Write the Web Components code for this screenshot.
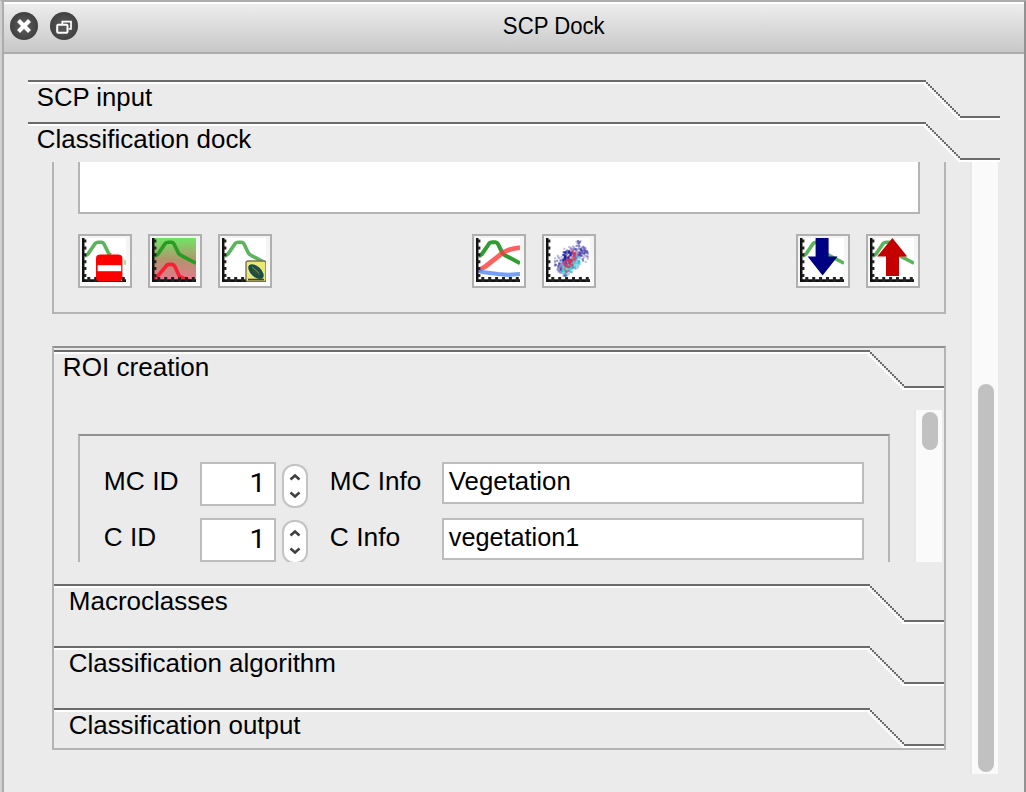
<!DOCTYPE html>
<html lang="en">
<head>
<meta charset="utf-8">
<title>SCP Dock</title>
<style>
html,body{margin:0;height:100%;overflow:hidden;background:#ebebeb}
body{font-family:"Liberation Sans",Arial,sans-serif;color:#000}
</style>
</head>
<body>
<scp-window></scp-window>
<script>
const define=(name,html,ready)=>customElements.define(name,class extends HTMLElement{
  connectedCallback(){
    if(this.shadowRoot)return;
    const root=this.attachShadow({mode:'open'});
    root.innerHTML=typeof html==='function'?html(this):html;
    if(ready)ready(this,root);
  }
});

/* One line of text, condensed or stretched so that its ink fills the given width. */
const pen=document.createElement('canvas').getContext('2d');
define('ui-label',el=>{
  const size=el.getAttribute('size')||26,w=+el.getAttribute('w'),text=el.getAttribute('text');
  const font=el.getAttribute('font')||'Liberation Sans';
  pen.font=size+'px "'+font+'"';
  const m=pen.measureText(text);
  const s=w/(m.actualBoundingBoxRight+m.actualBoundingBoxLeft);
  const x=m.actualBoundingBoxLeft*s+.8;
  return `<style>:host{display:block;flex:none;width:${w}px;height:30px;white-space:nowrap}
  span{display:inline-block;font-family:"${font}",sans-serif;font-size:${size}px;line-height:30px;transform-origin:0 0;transform:translateX(${x.toFixed(2)}px) scaleX(${s.toFixed(4)})}</style><span>${text}</span>`;
});

/* Toolbox tab header: a line that drops down at 45 degrees near its right end. */
define('tab-header',el=>{
  const w=+el.getAttribute('width'),k=w-74;
  let d='',hi='',soft='';
  for(let i=0;i<17;i++){
    d+=`M${k+i*2} ${2+i*2}h2v2h-2z`;
    hi+=`M${k-2+i*2} ${4+i*2}h2v2h-2z`;
    soft+=`M${k+i*2} ${4+i*2}h2v2h-2z`;
  }
  return `<style>:host{display:grid;flex:none;width:${w}px;height:${el.getAttribute('height')}px}
  svg,div{grid-area:1/1}svg{display:block}div{padding:2px 0 0 ${el.getAttribute('indent')}px}</style>
  <svg width="${w}" height="40" shape-rendering="crispEdges"><path fill="#fff" d="M0 2h${k}v2H0zM${w-42} 38H${w}v2H${w-42}z"/>
  <path fill="#f0f0f0" d="${soft}"/><path fill="#fff" d="${hi}"/>
  <path fill="#6b6b6b" d="M0 0h${k}v2H0zM${w-40} 36H${w}v2H${w-40}z${d}"/></svg><div><slot></slot></div>`;
});

define('scroll-bar',el=>`<style>:host{display:block;flex:none;box-sizing:border-box;width:28px;background:#fafafa;border-left:2px solid #e8e8e8;padding-top:${el.getAttribute('start')}px}
i{display:block;width:16px;height:${el.getAttribute('length')}px;margin-left:6px;border-radius:8px;background:#c1c1c1}</style><i></i>`);

const line='M1.3 9.2L3 8 6.7 2.6Q7.2 2.1 8 2.1H9.8Q10.6 2.2 11 3L13.4 7.9Q14 8.5 15 8.9L22 12.6';
const curve=`<path d="${line}" fill="none" stroke="#43ab43" stroke-width="1.8" opacity=".88"/>`;
let axes='<path d="M.6 0V21.3H22" fill="none" stroke="#111" stroke-width="1.3"/><path d="';
for(let i=0;i<6;i++)axes+=`M1 ${1.5+i*3.45}h1.2`;
for(let i=0;i<6;i++)axes+=`M${3.4+i*3.45} 22v-2.5`;
axes+='" stroke="#222" stroke-width="1.5"/>';
const cloud=()=>{
  let seed=17,s='';
  const rnd=()=>(seed=(seed*16807)%2147483647)/2147483647;
  const dot=(x,y,c,o)=>s+=`<rect x="${x.toFixed(1)}" y="${y.toFixed(1)}" width="1" height="1" fill="${c}" opacity="${o}"/>`;
  for(let i=0;i<290;i++){const t=rnd(),n=(rnd()+rnd()-1)*5.5;dot(Math.min(20.5,Math.max(4,5.5+t*13.5+n*.6)),Math.min(18.4,Math.max(1,16-t*12+n)),'#3434a4',.34)}
  for(let i=0;i<90;i++){const t=rnd();dot(8+t*8+(rnd()-.5)*3,16-t*7+(rnd()-.3)*4,'#20dfe8',.45)}
  for(let i=0;i<35;i++)dot(7.5+rnd()*4.5,6+rnd()*5,'#080894',.5);
  for(let i=0;i<60;i++){const t=rnd();dot(9+t*5+(rnd()-.5)*4,15-t*8+(rnd()-.5)*4,'#e02c48',.55)}
  return s;
};
const art={
  remove:()=>curve+axes+'<path d="M14.5 8H22v3.3h-1v8.2h-1v2h-6z" fill="#fff"/><rect x="7" y="8.2" width="13.2" height="13.6" rx="2" fill="#f00"/><rect x="7.8" y="13.6" width="11.8" height="3" fill="#fff"/><path d="M20.9 10.6l1.1.7v2.2l-1.1-.7z" fill="#a8dca8"/>',
  range:()=>`<defs><linearGradient id="g" x2="0" y2="1"><stop stop-color="#70e565"/><stop offset=".5" stop-color="#b3936d"/><stop offset="1" stop-color="#eb7791"/></linearGradient></defs><rect width="22" height="22" fill="url(#g)"/><path d="${line}" fill="none" stroke="#259c22" stroke-width="1.8"/><path d="M1 19.8l2-1 3.7-4.3Q7.5 13.2 8.6 13.2H10q1 .1 1.5 1.2L13.6 19l2.4 1.2 4 1.8" fill="none" stroke="#fa1f32" stroke-width="1.8"/>`+axes,
  calc:()=>curve+axes+'<rect x="12" y="11.5" width="10" height="10.3" rx="1" fill="#ebe775" stroke="#77745b" stroke-width=".7"/><g transform="rotate(43 17 16.8)"><ellipse cx="17" cy="16.8" rx="4.7" ry="2.6" fill="#174f4f"/><ellipse cx="17" cy="16.8" rx="2.5" ry="1.1" fill="#31502e"/><path d="M14 16.4h5" stroke="#a5a66a" stroke-width=".35"/></g><path d="M13 20.8h8" stroke="#45452c" stroke-width=".9"/>',
  plot:()=>`<path d="${line}" fill="none" stroke="#309d30" stroke-width="2"/><path d="M1 16.5L5 14 12 8.5Q15 5.5 22 4.8" fill="none" stroke="#ff3838" stroke-width="2.4" opacity=".8"/><path d="M0 15.5L3 17l8 1 5 .4L22 18" fill="none" stroke="#5c90f5" stroke-width="2.1" opacity=".85"/>`+axes,
  scatter:()=>cloud()+axes,
  import:()=>curve+axes+'<path d="M7.8 0h6.5v9.2h4.5L11.3 18.8 3.8 9.2h4z" fill="#000082"/>',
  export:()=>curve+axes+'<path d="M11.2 0L18.6 9.2h-4.1V19H8V9.2H3.6z" fill="#c50000"/>'
};
define('tool-button',el=>`<style>:host{display:block;box-sizing:border-box;width:54px;height:54px;padding:2px;border:2px solid #b0b0b0;background:linear-gradient(#f3f3f3,#fafafa)}svg{display:block;background:#fff}</style>
<svg width="44" height="44" viewBox="0 0 22 22">${art[el.getAttribute('icon')]()}</svg>`);

define('title-button',el=>`<style>:host,svg{display:block}</style><svg width="28" height="28" viewBox="0 0 28 28"><defs><radialGradient id="b"><stop stop-color="#606060"/><stop offset="1" stop-color="#404040"/></radialGradient></defs><circle cx="14" cy="14" r="14" fill="url(#b)"/>${
 el.getAttribute('icon')==='close'?'<path d="M8.5 8.5l11 11m0-11l-11 11" stroke="#fff" stroke-width="4.2"/>':
 '<path d="M12.3 12V9.6H21V16.8H18.7" fill="none" stroke="#fff" stroke-width="1.7"/><rect x="7.2" y="12.8" width="10.3" height="8" rx="1" fill="#555" stroke="#fff" stroke-width="2"/>'}</svg>`);

define('title-bar',`<style>:host{display:grid;grid-template-columns:498.5px 1fr;box-sizing:border-box;height:52px;border-top:2px solid #fff;border-bottom:2px solid #acacac;background:linear-gradient(#ededed,#c8c8c8)}
div{display:flex;gap:12px;padding:8px 0 0 6px}ui-label{margin-top:7px}</style>
<div><title-button icon="close"></title-button><title-button icon="float"></title-button></div><ui-label text="SCP Dock" size="23.5" w="101.5"></ui-label>`);

define('line-edit',`<style>:host{display:block;box-sizing:border-box;width:422px;height:42px;border:2px solid #bcbcbc;background:#fff;padding:2px 0 0 3.5px}</style><slot></slot>`);

define('spin-box',`<style>:host{display:flex;width:108px;height:46px;gap:6px}
div{box-sizing:border-box;width:76px;height:44px;border:2px solid #bcbcbc;background:#fff;padding:4px 0 0 49px}svg{display:block;margin-top:2px}</style>
<div><ui-label text="1" w="9" size="25.5" font="Roboto"></ui-label></div>
<svg width="26" height="44"><rect x="1" y="1" width="24" height="42" rx="11" fill="#fff" stroke="#c3c3c3" stroke-width="2"/><path d="M8.5 15.5l4.5-4 4.5 4M8.5 28.5l4.5 4 4.5-4" fill="none" stroke="#404040" stroke-width="2.5"/></svg>`);

define('roi-form',`<style>:host{display:flex;height:152px;overflow:hidden;justify-content:space-between;padding-left:24px;padding-right:2px}
section{box-sizing:border-box;width:812px;height:160px;margin-top:24px;border:2px solid #b4b4b4;border-top-color:#909090;padding:26px 0 0 24px}
.r{display:grid;grid-template-columns:96px 130px 112px 422px;height:56px}
.r>ui-label{margin-top:4px}.o{margin-left:1px}</style>
<section><div class="r"><ui-label class="o" text="MC ID" w="72"></ui-label><spin-box></spin-box><ui-label class="o" text="MC Info" w="89"></ui-label><line-edit><ui-label text="Vegetation" w="120.5"></ui-label></line-edit></div>
<div class="r"><ui-label text="C ID" w="50.5"></ui-label><spin-box></spin-box><ui-label text="C Info" w="69"></ui-label><line-edit><ui-label text="vegetation1" w="130"></ui-label></line-edit></div></section>
<scroll-bar start="2" length="38"></scroll-bar>`);

define('signature-panel',`<style>:host{display:block;box-sizing:border-box;width:894px;height:152px;border:2px solid #b4b4b4;border-top:0;padding:0 24px}
.list{box-sizing:border-box;height:52px;background:#fff;border:2px solid #b4b4b4;border-top:0}
nav{display:flex;margin-top:20px}div.g{display:flex;gap:16px}.m{margin-left:200px}.e{margin-left:auto}</style>
<div class="list"></div><nav><div class="g"><tool-button icon="remove"></tool-button><tool-button icon="range"></tool-button><tool-button icon="calc"></tool-button></div>
<div class="g m"><tool-button icon="plot"></tool-button><tool-button icon="scatter"></tool-button></div>
<div class="g e"><tool-button icon="import"></tool-button><tool-button icon="export"></tool-button></div></nav>`);

define('tool-box',`<style>:host{display:flex;flex-direction:column;box-sizing:border-box;width:894px;height:404px;border:2px solid #b4b4b4;border-top-color:#909090;padding-top:2px}
roi-form{margin-bottom:22px}</style>
<tab-header width="890" height="60" indent="9.5"><ui-label text="ROI creation" w="143"></ui-label></tab-header>
<roi-form></roi-form>
<tab-header width="890" height="62" indent="15.5"><ui-label text="Macroclasses" w="157"></ui-label></tab-header>
<tab-header width="890" height="62" indent="15"><ui-label text="Classification algorithm" w="264.5"></ui-label></tab-header>
<tab-header width="890" height="40" indent="15"><ui-label text="Classification output" w="231.5"></ui-label></tab-header>`);

define('scp-window',`<style>:host{display:block;box-sizing:border-box;width:1026px;height:792px;background:#ebebeb;border-top:2px solid #acacac;border-right:2px solid #929292;border-left:2px solid #d0d0d0}
.in{box-sizing:border-box;height:790px;border-left:2px solid #acacac}
main{padding:26px 0 0 24px}.dock{display:flex;width:970px;height:612px;justify-content:space-between}
.page{padding-left:24px;display:flex;flex-direction:column;gap:32px}</style>
<div class="in"><title-bar></title-bar><main>
<tab-header width="972" height="42" indent="8.5"><ui-label text="SCP input" w="115.5"></ui-label></tab-header>
<tab-header width="972" height="40" indent="8.5"><ui-label text="Classification dock" w="214.5"></ui-label></tab-header>
<div class="dock"><div class="page"><signature-panel></signature-panel><tool-box></tool-box></div><scroll-bar start="222" length="388"></scroll-bar></div>
</main></div>`);
</script>
</body>
</html>
